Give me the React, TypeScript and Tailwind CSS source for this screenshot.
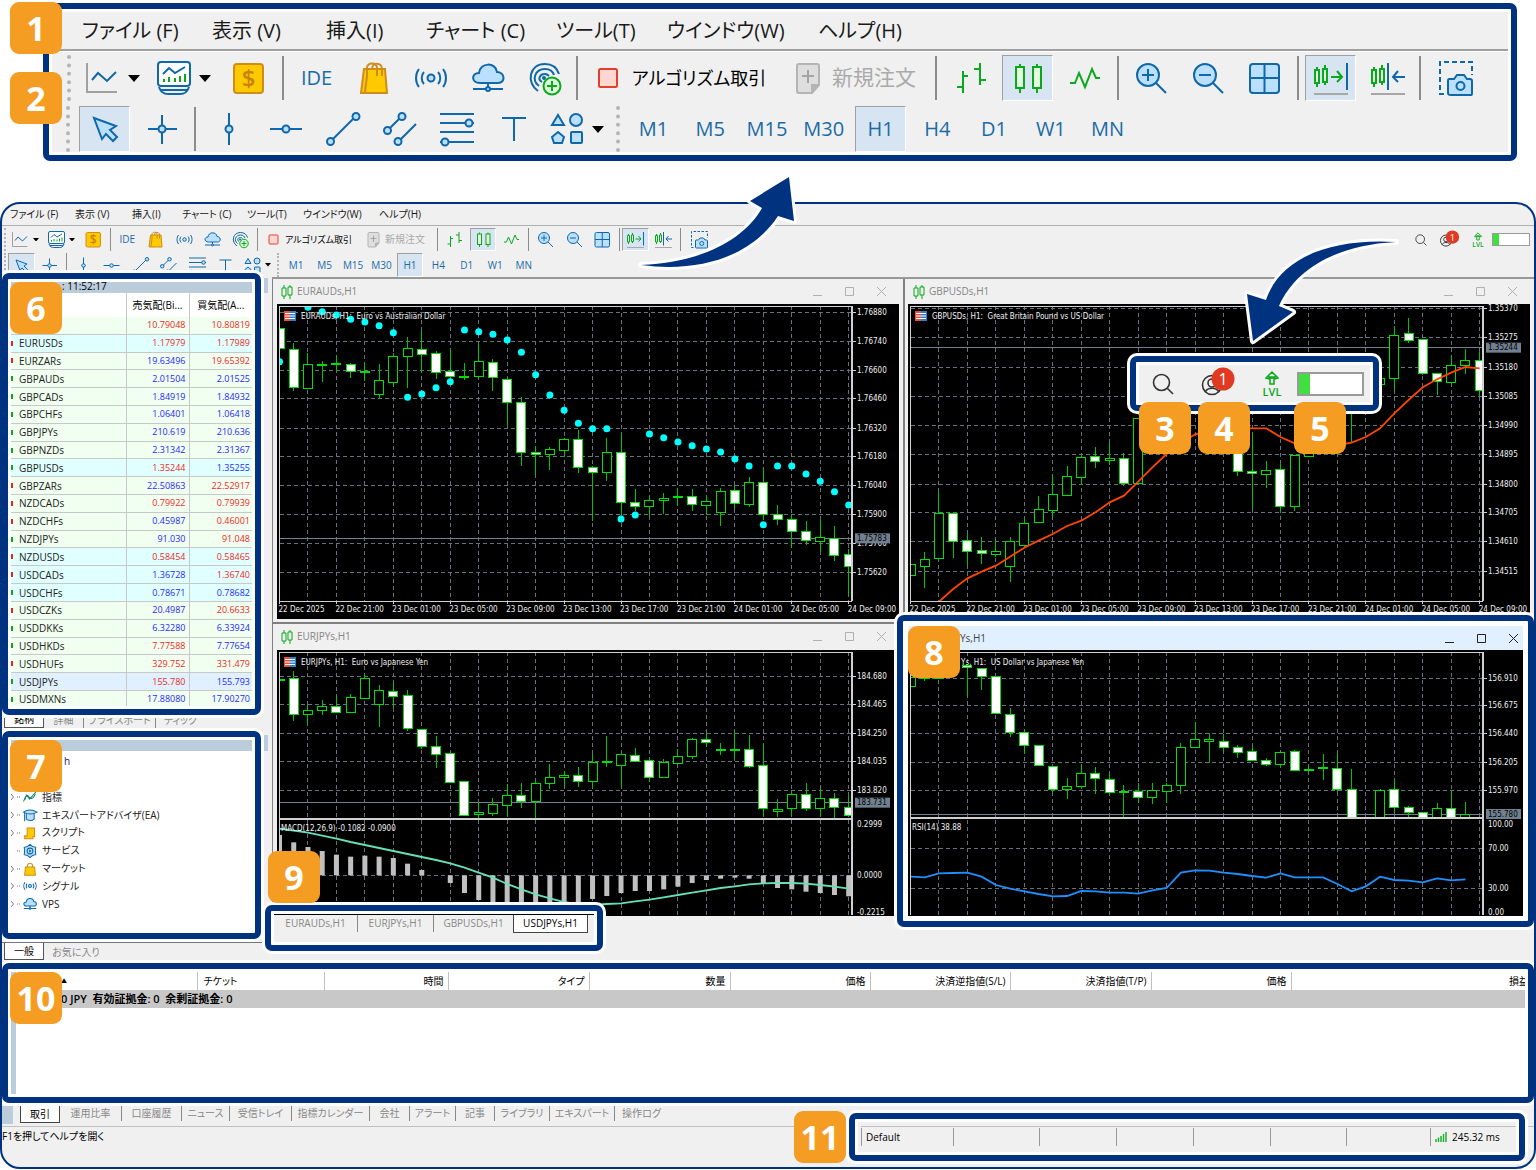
import type { ReactNode } from 'react';
import clsx from 'clsx';

const BLUE = '#0f68a8';
const SKY = '#bbe0ff';
const GREEN = '#0aa81c';
const LIME = '#00e000';

/* ---------- shared bits ---------- */

function Callout({ className, children }: { className?: string; children: ReactNode }) {
  return (
    <div className={clsx('rounded-[7px] border-[6px] border-[#00337f] bg-white ring-[3px] ring-white', className)}>
      {children}
    </div>
  );
}

function Badge({ n, className }: { n: number; className: string }) {
  return (
    <span
      className={clsx(
        'absolute z-20 flex size-[52px] items-center justify-center rounded-[9px] bg-[#f59c23] pb-px text-[34px] leading-none font-bold text-white',
        className,
      )}
    >
      {n}
    </span>
  );
}

/* ---------- toolbar icons, all on a 34 x 34 grid ---------- */

const icons: Record<string, ReactNode> = {
  line: (
    <>
      <path d="M1 2V31H31" stroke="#a0a0a0" />
      <path d="M6 19L12 12L21 20L30 11" stroke={BLUE} />
    </>
  ),
  monitor: (
    <>
      <rect x="1" y="1" width="32" height="24" rx="3" fill="#fff" stroke={BLUE} />
      <path d="M6 13L12 7L18 12L28 6" stroke={BLUE} />
      <path d="M7 21v-3M12 21v-5M18 21v-4M23 21v-6M28 21v-8" stroke={GREEN} />
      <path d="M2 26C4 32 8 33 11 33H23C27 33 30 32 32 26M4 29H30" stroke={BLUE} />
    </>
  ),
  dollar: (
    <>
      <rect x="2" y="3" width="29" height="29" rx="3" fill="#fdca00" stroke="#d08c18" />
      <text x="16.5" y="26" textAnchor="middle" fontSize="24" fontWeight="600" fill="#c98200">$</text>
    </>
  ),
  bag: (
    <>
      <path d="M7 8H28L30 32H4Z" fill="#fdca00" stroke="#d08c18" />
      <path d="M10 15V7C10 1 20 1 20 7V15M15 8C15 1 25 1 25 8V15M10 15L8 31" stroke="#d08c18" />
    </>
  ),
  signal: (
    <>
      <circle cx="17" cy="17" r="3.5" fill={SKY} stroke={BLUE} />
      <path d="M10 11C7 14 7 20 10 23M24 11C27 14 27 20 24 23M5 8C1 13 1 21 5 26M29 8C33 13 33 21 29 26" stroke={BLUE} />
    </>
  ),
  cloud: (
    <>
      <path d="M9 22C0 22 0 12 8 12C9 1 25 1 26 11C34 11 35 22 27 22Z" fill={SKY} stroke={BLUE} />
      <path d="M17 22V28M2 28H32" stroke={BLUE} />
      <circle cx="17" cy="28" r="2" fill={SKY} stroke={BLUE} />
    </>
  ),
  radar: (
    <>
      <path d="M10 30C-2 22 1 3 17 3C25 3 29 7 31 13M11 25C3 19 7 8 17 8C22 8 25 11 26 14M14 21C9 18 12 13 17 13C19 13 20 14 21 15" stroke={BLUE} />
      <circle cx="16" cy="17" r="2" fill={BLUE} />
      <circle cx="24" cy="25" r="8.5" fill="#dcfadc" stroke={GREEN} />
      <path d="M24 20V30M19 25H29" stroke={GREEN} />
    </>
  ),
  stop: <rect x="8" y="8" width="18" height="18" rx="1.5" fill="#ffd7d2" stroke="#e2402a" />,
  newOrder: (
    <>
      <path d="M8 3H26C27 3 28 4 28 5V24L21 32H8C7 32 6 31 6 30V5C6 4 7 3 8 3Z" fill="#dedede" stroke="#b4b4b4" />
      <path d="M28 24H21V32" fill="#b4b4b4" stroke="#b4b4b4" />
      <path d="M17 9V22M11 15H23" stroke="#a4a4a4" />
    </>
  ),
  bars: <path d="M9 10V32M3 26H9M9 15H14M26 2V24M20 8H26M26 19H32" stroke={GREEN} />,
  candles: (
    <>
      <path d="M9 3V32M26 3V32" stroke={GREEN} />
      <rect x="5" y="6" width="8" height="21" fill="#e4fbe0" stroke={GREEN} />
      <rect x="22" y="6" width="8" height="21" fill="#e4fbe0" stroke={GREEN} />
    </>
  ),
  zigzag: <path d="M2 22H7L11 12L17 26L24 8L28 17H32" stroke={GREEN} />,
  zoomIn: (
    <>
      <circle cx="14" cy="14" r="11" fill={SKY} stroke={BLUE} />
      <path d="M22 22L32 32M14 8V20M8 14H20" stroke={BLUE} />
    </>
  ),
  zoomOut: (
    <>
      <circle cx="14" cy="14" r="11" fill={SKY} stroke={BLUE} />
      <path d="M22 22L32 32M8 14H20" stroke={BLUE} />
    </>
  ),
  tile: (
    <>
      <rect x="2" y="3" width="29" height="29" rx="3" fill={SKY} stroke={BLUE} />
      <path d="M16.5 3V32M2 17H31" stroke={BLUE} />
    </>
  ),
  autoScroll: (
    <>
      <path d="M3 6V26M11 4V24M17 16H28M23 10L28 16L23 21" stroke={GREEN} />
      <path d="M1 9H5V22H1ZM9 8H13V21H9Z" fill="#e4fbe0" stroke={GREEN} />
      <path d="M33 2V29" stroke={BLUE} />
      <path d="M0 33H34" stroke="#a8a8a8" />
    </>
  ),
  shift: (
    <>
      <path d="M3 6V26M11 4V24" stroke={GREEN} />
      <path d="M1 9H5V22H1ZM9 8H13V21H9Z" fill="#e4fbe0" stroke={GREEN} />
      <path d="M17 2V29M22 16H34M27 10L22 16L27 21" stroke={BLUE} />
      <path d="M0 33H34" stroke="#a8a8a8" />
    </>
  ),
  camera: (
    <>
      <path d="M5 33H1V1H33V14" stroke={BLUE} strokeDasharray="5 3" />
      <path d="M10 18H15L18 14H25L28 18H31C33 18 33 19 33 20V32C33 34 33 34 31 34H12C10 34 9 34 9 32V20C9 19 9 18 10 18Z" fill={SKY} stroke={BLUE} />
      <circle cx="21.5" cy="25" r="4" fill={SKY} stroke={BLUE} />
    </>
  ),
  cursor: <path d="M6 6L28 14L22 18L29 25L25 29L18 22L14 27Z" fill={SKY} stroke={BLUE} />,
  cross: (
    <>
      <path d="M17 3V32M3 17H32" stroke={BLUE} />
      <circle cx="17" cy="17" r="3.5" fill={SKY} stroke={BLUE} />
    </>
  ),
  vline: (
    <>
      <path d="M17 1V33" stroke={BLUE} />
      <circle cx="17" cy="17" r="3.5" fill={SKY} stroke={BLUE} />
    </>
  ),
  hline: (
    <>
      <path d="M1 17H33" stroke={BLUE} />
      <circle cx="17" cy="17" r="3.5" fill={SKY} stroke={BLUE} />
    </>
  ),
  trend: (
    <>
      <path d="M5 29L29 5" stroke={BLUE} />
      <circle cx="30" cy="4.5" r="3.5" fill={SKY} stroke={BLUE} />
      <circle cx="4.5" cy="29.5" r="3.5" fill={SKY} stroke={BLUE} />
    </>
  ),
  channel: (
    <>
      <path d="M5 18L19 4M15 30L33 12" stroke={BLUE} />
      <circle cx="19" cy="4.5" r="3.5" fill={SKY} stroke={BLUE} />
      <circle cx="4.5" cy="18.5" r="3.5" fill={SKY} stroke={BLUE} />
      <circle cx="15" cy="29.5" r="3.5" fill={SKY} stroke={BLUE} />
    </>
  ),
  fibo: (
    <>
      <path d="M0 2H34M0 11H34M0 20H34M0 30H34" stroke={BLUE} />
      <circle cx="29" cy="11" r="3.5" fill={SKY} stroke={BLUE} />
      <circle cx="5" cy="30" r="3.5" fill={SKY} stroke={BLUE} />
    </>
  ),
  text: <path d="M5 6H29M17 6V29" stroke={BLUE} />,
  shapes: (
    <g fill={SKY} stroke={BLUE}>
      <path d="M8 3L14 13H2Z" />
      <circle cx="26" cy="8" r="6" />
      <path d="M8 20L14 25L12 31H4L2 25Z" />
      <rect x="21" y="20" width="11" height="11" rx="1" />
    </g>
  ),
};

function Icon({ name, className }: { name: string; className?: string }) {
  return (
    <svg viewBox="0 0 34 34" fill="none" strokeWidth="2" className={clsx('shrink-0 overflow-visible', className)} aria-hidden="true">
      {icons[name]}
    </svg>
  );
}

/* ---------- menu + toolbars (large copy and window copy) ---------- */

const menus = [
  { label: 'ファイル (F)', big: 'w-[130px]', small: 'w-[65px]' },
  { label: '表示 (V)', big: 'w-[114px]', small: 'w-[57px]' },
  { label: '挿入(I)', big: 'w-[100px]', small: 'w-[50px]' },
  { label: 'チャート (C)', big: 'w-[130px]', small: 'w-[65px]' },
  { label: 'ツール(T)', big: 'w-[111px]', small: 'w-[56px]' },
  { label: 'ウインドウ(W)', big: 'w-[151px]', small: 'w-[76px]' },
  { label: 'ヘルプ(H)', big: 'w-[100px]', small: 'w-[50px]' },
];

function MenuBar({ big }: { big?: boolean }) {
  return (
    <nav className={clsx('flex items-center whitespace-nowrap text-[#1a1a1a]', big ? 'h-[37px] pl-[30px] text-[20px]' : 'h-[21px] pl-2 text-[10px]')}>
      {menus.map(m => (
        <button key={m.label} className={clsx('text-left', big ? m.big : m.small)}>{m.label}</button>
      ))}
    </nav>
  );
}

function Tool({ big, name, on, label }: { big?: boolean; name?: string; on?: boolean; label?: string }) {
  return (
    <button
      aria-label={label ?? name}
      className={clsx(
        'flex flex-1 items-center justify-center border text-[#1a6ba6]',
        big ? 'mx-[3px] text-[20px]' : 'mx-px text-[10px]',
        on ? 'border-t-[#a0a0a0] border-r-white border-b-white border-l-[#a0a0a0] bg-[#d7e4f2]' : 'border-transparent',
      )}
    >
      {name ? <Icon name={name} className={big ? 'size-[34px]' : 'size-[17px]'} /> : label}
    </button>
  );
}

function DropTool({ big, name }: { big?: boolean; name: string }) {
  return (
    <button aria-label={name} className={clsx('flex flex-1 items-center', big ? 'gap-2 pl-2' : 'gap-1 pl-1')}>
      <Icon name={name} className={big ? 'size-[34px]' : 'size-[17px]'} />
      <svg viewBox="0 0 12 7" className={big ? 'w-3' : 'w-[6px]'} aria-hidden="true"><path d="M0 0H12L6 7Z" /></svg>
    </button>
  );
}

function Sep({ big, className }: { big?: boolean; className: string }) {
  return (
    <span className={clsx('flex shrink-0 justify-center', big && 'py-px', className)}>
      <i className={clsx('bg-[#8c8c8c]', big ? 'w-[2px]' : 'w-px')} />
    </span>
  );
}

function Grip({ big, className }: { big?: boolean; className: string }) {
  return (
    <span className={clsx('flex shrink-0 justify-center', className)}>
      <i className={clsx('border-dotted border-[#b4b4b4]', big ? 'border-l-4' : 'border-l-2')} />
    </span>
  );
}

const frames = ['M1', 'M5', 'M15', 'M30', 'H1', 'H4', 'D1', 'W1', 'MN'];

function Toolbars({ big, children }: { big?: boolean; children?: ReactNode }) {
  const w = (large: string, small: string) => clsx('flex shrink-0', big ? large : small);
  const icon = big ? 'size-[34px]' : 'size-[17px]';
  return (
    <>
      <div className={clsx('flex items-stretch', big ? 'h-[51px] pt-[3px] pb-[2px]' : 'h-[27px] py-[2px]')}>
        <Grip big={big} className={big ? 'w-[26px] pl-2' : 'w-[6px]'} />
        <div className={w('w-[142px]', 'w-[71px]')}>
          <DropTool big={big} name="line" />
          <DropTool big={big} name="monitor" />
        </div>
        <div className={w('w-[58px]', 'w-[29px]')}><Tool big={big} name="dollar" /></div>
        <Sep big={big} className={big ? 'w-[10px]' : 'w-[5px]'} />
        <div className={w('w-[285px]', 'w-[142px]')}>
          <Tool big={big} label="IDE" />
          {['bag', 'signal', 'cloud', 'radar'].map(n => <Tool key={n} big={big} name={n} />)}
        </div>
        <Sep big={big} className={big ? 'w-[8px]' : 'w-[5px]'} />
        <button className={clsx('flex shrink-0 items-center whitespace-nowrap text-black', big ? 'w-[200px] gap-[7px] pl-[10px] text-[18px]' : 'w-[100px] gap-[3px] pl-[5px] text-[9px]')}>
          <Icon name="stop" className={icon} />アルゴリズム取引
        </button>
        <button disabled className={clsx('flex shrink-0 items-center whitespace-nowrap text-[#aaa]', big ? 'w-[149px] gap-[7px] pl-[10px] text-[21px]' : 'w-[74px] gap-[3px] pl-[5px] text-[10px]')}>
          <Icon name="newOrder" className={icon} />新規注文
        </button>
        <Sep big={big} className={big ? 'w-[12px]' : 'w-[6px]'} />
        <div className={w('w-[171px]', 'w-[86px]')}>
          <Tool big={big} name="bars" /><Tool big={big} name="candles" on /><Tool big={big} name="zigzag" />
        </div>
        <Sep big={big} className={big ? 'w-[9px]' : 'w-[5px]'} />
        <div className={w('w-[171px]', 'w-[86px]')}>
          <Tool big={big} name="zoomIn" /><Tool big={big} name="zoomOut" /><Tool big={big} name="tile" />
        </div>
        <Sep big={big} className={big ? 'w-[9px]' : 'w-[4px]'} />
        <div className={w('w-[114px]', 'w-[57px]')}>
          <Tool big={big} name="autoScroll" on /><Tool big={big} name="shift" />
        </div>
        <Sep big={big} className={big ? 'w-[8px]' : 'w-[4px]'} />
        <div className={w('w-[64px]', 'w-[34px]')}><Tool big={big} name="camera" /></div>
        {children}
      </div>
      <div className={clsx('flex items-stretch', big ? 'h-[49px] pt-[3px]' : 'h-6')}>
        <Grip big={big} className={big ? 'w-[24px] pl-2' : 'w-[5px]'} />
        <div className={w('w-[114px]', 'w-[57px]')}>
          <Tool big={big} name="cursor" on /><Tool big={big} name="cross" />
        </div>
        <Sep big={big} className={big ? 'w-[10px]' : 'w-[5px]'} />
        <div className={w('w-[342px]', 'w-[171px]')}>
          {['vline', 'hline', 'trend', 'channel', 'fibo', 'text'].map(n => <Tool key={n} big={big} name={n} />)}
        </div>
        <div className={w('w-[69px]', 'w-[34px]')}><DropTool big={big} name="shapes" /></div>
        <Grip big={big} className={big ? 'w-[14px]' : 'w-[8px]'} />
        <div className={w('w-[511px]', 'w-[256px]')}>
          {frames.map(f => <Tool key={f} big={big} label={f} on={f === 'H1'} />)}
        </div>
      </div>
    </>
  );
}

function Account({ big }: { big?: boolean }) {
  return (
    <div className={clsx('flex items-center', big ? 'h-full gap-[26px] pl-[13px]' : 'ml-auto gap-3 pr-1')}>
      <button aria-label="検索">
        <svg viewBox="0 0 22 22" fill="none" stroke="#333" strokeWidth="1.6" className={big ? 'size-[22px]' : 'size-3'}>
          <circle cx="9.5" cy="9.5" r="8" /><path d="M15.5 15.5L21 21" />
        </svg>
      </button>
      <button aria-label="アカウント">
        <svg viewBox="0 0 36 24" className={clsx('overflow-visible', big ? 'h-6 w-9' : 'h-[14px] w-[21px]')}>
          <g fill="none" stroke="#333" strokeWidth="1.6">
            <circle cx="12" cy="13" r="9.5" /><circle cx="12" cy="11" r="4" /><path d="M5 20C8 15 16 15 19 20" />
          </g>
          <circle cx="23" cy="7" r="11.5" fill="#e03a22" />
          <text x="23" y="13" textAnchor="middle" fontSize="16" fill="#fff">1</text>
        </svg>
      </button>
      <svg viewBox="0 0 20 26" className={big ? 'h-[26px] w-5' : 'h-4 w-3'}>
        <path d="M10 1L16 7L13 8V6H7V8L4 7ZM8 7H12V13H8Z" fill="none" stroke={GREEN} strokeWidth="1.5" />
        <text x="10" y="25" textAnchor="middle" fontSize="11" fontWeight="600" fill={GREEN}>LVL</text>
      </svg>
      <div className={clsx('border-[#9a9a9a] bg-white', big ? '-ml-[11px] h-6 w-[67px] border-2' : '-ml-1 h-[13px] w-[38px] border')}>
        <div className={clsx('h-full bg-[#3fe03f]', big ? 'w-[11px]' : 'w-[6px]')} />
      </div>
    </div>
  );
}

/* ---------- charts ---------- */

// high, body top, body bottom, low (thirds of a pixel under the origin), 1 = falling
type Candle = [number, number, number, number, number] | null;

const PITCH = 14.23;

const euraud: Candle[] = [
  [145, 145, 206, 206, 1], [190, 207, 322, 332, 1], [220, 253, 325, 328, 0], [243, 252, 254, 307, 0], [226, 250, 252, 275, 0],
  [250, 253, 274, 293, 1], [250, 273, 275, 303, 0], [252, 300, 344, 356, 0], [218, 229, 306, 322, 0], [171, 205, 230, 323, 0],
  [153, 207, 223, 278, 1], [214, 220, 276, 296, 1], [208, 274, 290, 290, 1], [249, 288, 290, 299, 0], [192, 244, 288, 290, 0],
  [238, 247, 293, 333, 1], [297, 297, 367, 437, 1], [352, 367, 517, 557, 1], [498, 516, 522, 584, 1], [500, 508, 523, 570, 0],
  [475, 479, 512, 531, 0], [450, 479, 562, 580, 1], [557, 562, 577, 723, 1], [475, 517, 577, 602, 0], [463, 517, 666, 710, 1],
  [628, 668, 680, 693, 1], [650, 661, 680, 710, 0], [638, 655, 660, 703, 0], [625, 650, 653, 677, 0], [628, 650, 674, 692, 1],
  [648, 664, 677, 706, 0], [625, 633, 697, 738, 0], [615, 631, 671, 688, 1], [592, 607, 674, 680, 0], [560, 607, 703, 720, 1],
  [675, 703, 719, 735, 1], [703, 718, 754, 804, 1], [724, 754, 782, 796, 1], [720, 772, 783, 815, 0], [738, 775, 826, 842, 1],
  [808, 823, 860, 948, 1],
];

const sar = [
  245, 0, 82, 95, 105, 118, 126, 137, 158, 352, 342, 323, 305, 150, 155, 163, 180, 217, 284, 345, 391, 430, 446, 446, 717, 705,
  462, 473, 486, 497, 507, 516, 537, 558, 734, 558, 558, 582, 604, 635, 675,
];

const eurjpy: Candle[] = [
  [177, 177, 179, 179, 0], [154, 175, 284, 302, 1], [256, 272, 284, 312, 0], [239, 259, 272, 284, 0], [228, 259, 276, 278, 1],
  [222, 232, 276, 276, 0], [161, 175, 234, 234, 0], [194, 211, 252, 320, 0], [187, 213, 228, 265, 1], [210, 227, 326, 332, 1],
  [328, 328, 380, 388, 1], [349, 379, 404, 444, 1], [400, 400, 487, 487, 1], [485, 485, 587, 587, 1], [545, 578, 584, 595, 0],
  [533, 553, 581, 587, 0], [491, 525, 556, 592, 0], [488, 525, 545, 563, 1], [480, 490, 545, 594, 0], [432, 472, 491, 507, 0],
  [452, 466, 472, 500, 0], [442, 466, 485, 502, 1], [402, 427, 485, 505, 0], [348, 424, 427, 442, 0], [402, 403, 437, 503, 0],
  [384, 405, 423, 425, 1], [414, 421, 473, 485, 1], [418, 427, 473, 474, 0], [387, 409, 429, 432, 0], [355, 358, 409, 418, 0],
  [340, 358, 368, 379, 1], [368, 389, 392, 404, 0], [333, 388, 390, 416, 0], [346, 389, 438, 445, 1], [369, 437, 566, 592, 1],
  [538, 569, 574, 590, 0], [513, 523, 566, 588, 0], [488, 523, 566, 572, 1], [507, 535, 566, 592, 0], [519, 535, 563, 594, 1],
  [525, 563, 586, 592, 1],
];

const macdBars = [
  645, 667, 681, 693, 704, 710, 707, 710, 714, 731, 750, 766, 789, 819, 840, 856, 868, 874, 876, 870, 860, 848, 837, 828, 819,
  813, 813, 808, 800, 789, 780, 776, 773, 776, 790, 804, 808, 815, 819, 825, 829,
];

const macdLine = [
  626, 632, 638, 647, 656, 666, 675, 684, 693, 702, 711, 720, 730, 743, 758, 773, 792, 808, 823, 835, 846, 853, 855, 852, 850,
  844, 839, 832, 825, 818, 811, 804, 799, 793, 790, 789, 789, 791, 795, 800, 806,
];

const gbpusd: Candle[] = [
  [1108, 1108, 1142, 1142, 0], [1072, 1093, 1113, 1178, 0], [890, 955, 1090, 1092, 0], [953, 955, 1038, 1090, 1], [1018, 1037, 1070, 1110, 1],
  [1025, 1067, 1075, 1107, 1], [1033, 1069, 1078, 1085, 0], [1025, 1039, 1114, 1160, 0], [969, 985, 1052, 1053, 0], [902, 944, 982, 983, 0],
  [840, 899, 946, 967, 0], [813, 845, 902, 903, 0], [780, 787, 847, 867, 0], [755, 783, 798, 820, 1], [743, 791, 797, 809, 0],
  [775, 790, 865, 873, 1], [670, 670, 865, 867, 0], [600, 640, 680, 700, 0], [580, 620, 680, 700, 0], [580, 600, 640, 650, 1],
  [560, 600, 640, 656, 0], null, [600, 620, 700, 720, 1], [690, 700, 828, 842, 1], [715, 829, 835, 943, 1],
  [797, 826, 838, 879, 0], [807, 823, 935, 953, 1], [780, 780, 934, 947, 0], [700, 700, 784, 784, 0], null,
  [470, 560, 620, 640, 0], [600, 610, 640, 742, 0], null, [528, 550, 567, 622, 0], [392, 420, 550, 585, 0],
  [370, 415, 437, 443, 1], [433, 433, 536, 540, 1], [535, 535, 560, 600, 1], [480, 511, 562, 565, 0], [462, 496, 512, 538, 0],
  [472, 496, 587, 603, 1],
];

const average = [
  1290, 1255, 1220, 1182, 1150, 1130, 1112, 1085, 1058, 1037, 1017, 993, 977, 952, 922, 902, 860, 817, 777, 745, 718, 708, 702,
  700, 700, 700, 726, 745, 755, 758, 750, 743, 726, 700, 655, 615, 577, 553, 533, 516, 520,
];

const usdjpy: Candle[] = [
  [700, 712, 739, 739, 0], [700, 700, 715, 722, 0], [690, 690, 715, 718, 0], [670, 680, 700, 705, 0], [675, 677, 681, 768, 1],
  [683, 685, 710, 750, 1], [708, 710, 821, 823, 1], [805, 823, 877, 890, 1], [868, 877, 916, 943, 1], [916, 916, 975, 977, 1],
  [978, 980, 1047, 1057, 1], [1015, 1039, 1047, 1077, 0], [973, 1000, 1040, 1043, 0], [982, 1001, 1015, 1062, 1], [1002, 1018, 1057, 1060, 1],
  [1036, 1053, 1057, 1132, 1], [1029, 1053, 1072, 1090, 1], [1030, 1051, 1072, 1091, 0], [1030, 1037, 1053, 1090, 0], [910, 922, 1037, 1062, 0],
  [846, 898, 923, 923, 0], [880, 897, 903, 970, 0], [883, 903, 923, 933, 1], [916, 922, 938, 955, 1], [918, 934, 962, 963, 1],
  [953, 962, 973, 977, 1], [934, 937, 973, 980, 0], [930, 935, 990, 990, 1], [977, 987, 991, 992, 0], [942, 983, 986, 1020, 0],
  [942, 985, 1047, 1055, 1], [988, 1047, 1140, 1140, 1], null, [1047, 1052, 1140, 1140, 0], [1020, 1049, 1103, 1118, 1],
  [1098, 1103, 1116, 1130, 1], [1116, 1116, 1140, 1140, 1], [1088, 1105, 1140, 1140, 0], [1054, 1105, 1140, 1140, 1], [1085, 1122, 1140, 1140, 0],
];

const rsi = [
  1310, 1312, 1300, 1299, 1298, 1310, 1335, 1346, 1354, 1362, 1369, 1368, 1353, 1354, 1358, 1358, 1361, 1351, 1344, 1298, 1291,
  1292, 1298, 1302, 1308, 1313, 1300, 1312, 1312, 1312, 1332, 1354, 1339, 1310, 1320, 1322, 1327, 1315, 1321, 1318,
];

const dates = [
  '22 Dec 2025', '22 Dec 21:00', '23 Dec 01:00', '23 Dec 05:00', '23 Dec 09:00', '23 Dec 13:00', '23 Dec 17:00', '23 Dec 21:00',
  '24 Dec 01:00', '24 Dec 05:00', '24 Dec 09:00',
];

type ChartProps = {
  id: string;
  box: [number, number, number, number];
  origin: number;
  bottom: number;
  title: string;
  titleInset?: number;
  candles: Candle[];
  scale: [number, string][];
  price: [number, string];
  showDates?: boolean;
  // lower indicator pane
  pane?: { caption: string; labels: [number, string][]; lines: number[] };
  overlay: (x: (i: number) => number, y: (v: number) => number) => ReactNode;
};

function Chart({ id, box, origin, bottom, title, titleInset = 24, candles, scale, price, showDates, pane, overlay }: ChartProps) {
  const [bx, by, bw, bh] = box;
  const left = bx + 3;
  const right = bx + 575;
  const top = by + 2;
  const end = pane ? by + bh - 1 : bottom;
  const x = (i: number) => bx + 2.5 + i * PITCH;
  const y = (v: number) => origin + v / 3;

  return (
    <svg viewBox={box.join(' ')} className="block w-full bg-black font-['DejaVu_Sans_Condensed',sans-serif]" fontSize="8" role="img" aria-label={title}>
      <defs>
        <clipPath id={id}><rect x={left} y={top} width={right - left} height={bottom - top} /></clipPath>
        <clipPath id={id + '-all'}><rect x={left} y={top} width={right - left} height={end - top} /></clipPath>
      </defs>
      <g stroke="#64717f" strokeDasharray="4 3" shapeRendering="crispEdges">
        {Array.from({ length: 20 }, (_, k) => <path key={k} d={`M${x(2 * k + 2)} ${top}V${end}`} />)}
        {scale.map(([v]) => <path key={v} d={`M${left} ${y(v)}H${right}`} />)}
        {pane?.lines.map(v => <path key={v} d={`M${left} ${y(v)}H${right}`} />)}
      </g>
      <path d={`M${left} ${y(price[0])}H${right}`} stroke="#708090" shapeRendering="crispEdges" />
      <g clipPath={`url(#${id})`} shapeRendering="crispEdges">
        {candles.map((c, i) => c && (
          <g key={i} stroke={LIME}>
            <path d={`M${x(i)} ${y(c[0])}V${y(c[3])}`} stroke="#00c400" />
            <rect x={x(i) - 4.5} y={y(c[1])} width="9" height={Math.max(1, (c[2] - c[1]) / 3)} fill={c[4] ? '#fff' : '#000'} />
          </g>
        ))}
      </g>
      <g clipPath={`url(#${id}-all)`}>{overlay(x, y)}</g>
      <g stroke="#d0d0d0" fill="none" shapeRendering="crispEdges">
        <path d={`M${left - 0.5} ${end}V${top}H${right}`} />
        <path d={`M${right} ${top}V${end}`} strokeWidth="2" />
        <path d={`M${left} ${bottom}H${right}`} strokeWidth={pane ? 2 : 1} />
        {scale.map(([v]) => <path key={v} d={`M${right} ${y(v)}h4`} />)}
        {showDates && dates.map((d, k) => <path key={d} d={`M${x(4 * k)} ${bottom}v3`} />)}
      </g>
      <g fill="#f0f0f0" dominantBaseline="central">
        {scale.map(([v, t]) => <text key={t} x={right + 5} y={y(v)}>{t}</text>)}
        {pane?.labels.map(([v, t]) => <text key={t} x={right + 5} y={y(v)}>{t}</text>)}
        {showDates && dates.map((d, k) => <text key={d} x={x(4 * k) - 1} y={bottom + 8}>{d}</text>)}
        <text x={bx + titleInset} y={by + 12} className="whitespace-pre">{title}</text>
        {pane && <text x={left + 1} y={bottom + 9}>{pane.caption}</text>}
      </g>
      <rect x={bx + 7} y={by + 7} width="6" height="10" fill="#e8503c" />
      <rect x={bx + 13} y={by + 7} width="6" height="10" fill="#2f80c8" />
      <path d={`M${bx + 8} ${by + 9.5}h10M${bx + 8} ${by + 12}h10M${bx + 8} ${by + 14.5}h10`} stroke="#fff" />
      <rect x={right + 3} y={y(price[0]) - 5} width="35" height="10" fill="#708090" />
      <text x={right + 5} y={y(price[0])} dominantBaseline="central">{price[1]}</text>
    </svg>
  );
}

const points = (data: number[], x: (i: number) => number, y: (v: number) => number) =>
  data.map((v, i) => `${x(i)},${y(v)}`).join(' ');

function WindowTitle({ name, active }: { name: string; active?: boolean }) {
  return (
    <div className={clsx('flex items-center text-[10px]', active ? 'h-6 bg-[#e0f0fe] pl-[52px] text-[#444]' : 'h-[25px] pl-2 text-[#858585]')}>
      {!active && (
        <svg viewBox="0 0 12 14" className="mr-1 h-[14px] w-3" fill="none" stroke={GREEN}>
          <path d="M3 0V14M9 0V14" /><path d="M1 3H5V11H1ZM7 2H11V10H7Z" fill="#f0f0f0" />
        </svg>
      )}
      {name}
      <div className={clsx('ml-auto flex items-center gap-[21px]', active ? 'pr-1 text-[#222]' : 'pr-4 text-[#b0b0b0]')}>
        {['M1 9.5H10', 'M1.5 1.5H9.5V9.5H1.5Z', 'M1 1L10 10M10 1L1 10'].map((d, i) => (
          <button key={d} aria-label={['最小化', '最大化', '閉じる'][i]}>
            <svg viewBox="0 0 11 11" className="size-[11px]" fill="none" stroke="currentColor"><path d={d} /></svg>
          </button>
        ))}
      </div>
    </div>
  );
}

/* ---------- side panels ---------- */

// symbol, bid, ask, bid up, ask up, direction tick, row shade
const quotes: [string, string, string, number, number, number, string][] = [
  ['', '10.79048', '10.80819', 0, 0, 0, 'g'],
  ['EURUSDs', '1.17979', '1.17989', 0, 0, 0, 'c'],
  ['EURZARs', '19.63496', '19.65392', 1, 0, 0, 'g'],
  ['GBPAUDs', '2.01504', '2.01525', 1, 1, 1, 'g'],
  ['GBPCADs', '1.84919', '1.84932', 1, 1, 1, 'g'],
  ['GBPCHFs', '1.06401', '1.06418', 1, 1, 1, 'g'],
  ['GBPJPYs', '210.619', '210.636', 1, 1, 1, 'g'],
  ['GBPNZDs', '2.31342', '2.31367', 1, 1, 1, 'g'],
  ['GBPUSDs', '1.35244', '1.35255', 0, 1, 1, 'c'],
  ['GBPZARs', '22.50863', '22.52917', 1, 0, 0, 'g'],
  ['NZDCADs', '0.79922', '0.79939', 0, 0, 0, 'g'],
  ['NZDCHFs', '0.45987', '0.46001', 1, 0, 0, 'g'],
  ['NZDJPYs', '91.030', '91.048', 1, 0, 1, 'g'],
  ['NZDUSDs', '0.58454', '0.58465', 0, 0, 0, 'c'],
  ['USDCADs', '1.36728', '1.36740', 1, 0, 0, 'c'],
  ['USDCHFs', '0.78671', '0.78682', 1, 1, 1, 'c'],
  ['USDCZKs', '20.4987', '20.6633', 1, 0, 0, 'g'],
  ['USDDKKs', '6.32280', '6.33924', 1, 1, 1, 'g'],
  ['USDHKDs', '7.77588', '7.77654', 0, 1, 1, 'g'],
  ['USDHUFs', '329.752', '331.479', 0, 0, 0, 'g'],
  ['USDJPYs', '155.780', '155.793', 0, 1, 1, 's'],
  ['USDMXNs', '17.88080', '17.90270', 1, 1, 1, 'g'],
];

const shades: Record<string, string> = { g: 'bg-[#f0fff0]', c: 'bg-[#e0ffff]', s: 'bg-[#e0f0ff]' };
const tone = (up: number) => (up ? 'text-[#2828ff]' : 'text-[#f0281e]');

function MarketWatch() {
  return (
    <div className="h-[424px] overflow-hidden">
      <div className="h-[11px] bg-[#bbccdb] pl-[51px] text-[10px] leading-[9px]">: 11:52:17</div>
      <table className="h-[416px] w-full table-fixed border-collapse text-right text-[9px] leading-[14px] whitespace-nowrap">
        <colgroup><col /><col className="w-[63px]" /><col className="w-[63px]" /></colgroup>
        <thead>
          <tr className="text-center text-[10px]">
            <th className="h-6" aria-label="銘柄" />
            <th className="h-6 border-l border-[#c8c8c8] p-0 font-normal">売気配(Bi...</th>
            <th className="h-6 border-l border-[#c8c8c8] p-0 font-normal">買気配(A...</th>
          </tr>
        </thead>
        <tbody>
          {quotes.map(([symbol, bid, ask, bidUp, askUp, dir, shade]) => (
            <tr key={bid} className={clsx('border-b border-[#c8c8c8]', shades[shade])}>
              <td className="p-0 text-[10px] text-[#222]">
                <div className="flex items-center gap-[6px]">
                  <i className={clsx('h-[5px] w-[2px]', dir ? 'bg-[#0aa81c]' : 'bg-[#e0281c]')} />{symbol}
                </div>
              </td>
              <td className={clsx('border-l border-[#c8c8c8] p-0 pr-[3px]', tone(bidUp))}>{bid}</td>
              <td className={clsx('border-l border-[#c8c8c8] p-0 pr-[2px]', tone(askUp))}>{ask}</td>
            </tr>
          ))}
        </tbody>
      </table>
    </div>
  );
}

const hat = (
  <g stroke={BLUE} fill={SKY}>
    <path d="M8 13V27C14 31 22 31 27 27V13" /><path d="M1 10C12 3 22 3 34 10C24 16 12 16 1 10Z" /><path d="M4 11V32" />
  </g>
);
const nav: [string, ReactNode][] = [
  ['指標', <><path d="M1 28L9 12L16 22L32 4" stroke={GREEN} /><path d="M4 24C12 -6 16 40 30 10" stroke={BLUE} /></>],
  ['エキスパートアドバイザ(EA)', hat],
  ['スクリプト', <path d="M10 5H28V26H24V31H4V24H10Z" fill="#fdca00" stroke="#d08c18" />],
  ['サービス', <><path d="M17 1L23 6L31 8L30 17L31 26L23 28L17 33L11 28L3 26L4 17L3 8L11 6Z" fill={SKY} stroke={BLUE} /><circle cx="17" cy="17" r="7" stroke={BLUE} /><path d="M15 13L21 17L15 21Z" fill={BLUE} /></>],
  ['マーケット', <><path d="M6 12H28L30 32H4Z" fill="#fdca00" stroke="#d08c18" /><path d="M11 12V8C11 2 23 2 23 8V12" stroke="#d08c18" /></>],
  ['シグナル', icons.signal],
  ['VPS', icons.cloud],
];

function Navigator() {
  return (
    <div className="h-[190px] text-[10px]">
      <div className="h-[11px] bg-[#bbccdb]" />
      <ul className="mt-[2px] grid h-40 grid-rows-9 text-[#222]">
        <li className="flex items-center pl-[53px] text-[#202060]">h</li>
        <li />
        {nav.map(([label, art]) => (
          <li key={label} className="flex items-center">
            <svg viewBox="0 0 12 10" className="h-[10px] w-3" fill="none" stroke="#777">
              {label !== 'サービス' && <path d="M0 2L2.5 5L0 8" />}
              <path d="M6 5H10" strokeDasharray="1 1" />
            </svg>
            <svg viewBox="0 0 34 34" className="size-[14px] overflow-visible" fill="none" strokeWidth="2.5">{art}</svg>
            <a href="#" className="ml-[5px] whitespace-nowrap">{label}</a>
          </li>
        ))}
      </ul>
    </div>
  );
}

/* ---------- bottom toolbox ---------- */

const columns: [string, string][] = [
  ['時間', 'w-[124px]'], ['タイプ', 'w-[141px]'], ['数量', 'w-[141px]'], ['価格', 'w-[140px]'], ['決済逆指値(S/L)', 'w-[140px]'],
  ['決済指値(T/P)', 'w-[141px]'], ['価格', 'w-[140px]'],
];

const toolboxTabs: [string, string][] = [
  ['運用比率', 'w-[61px]'], ['口座履歴', 'w-[60px]'], ['ニュース', 'w-[48px]'], ['受信トレイ', 'w-[62px]'], ['指標カレンダー', 'w-[78px]'],
  ['会社', 'w-[40px]'], ['アラート', 'w-[46px]'], ['記事', 'w-[39px]'], ['ライブラリ', 'w-[55px]'], ['エキスパート', 'w-[65px]'], ['操作ログ', 'w-[54px]'],
];

function Toolbox() {
  return (
    <div className="flex h-[122px] overflow-hidden">
      <div className="w-[5px] shrink-0 bg-[#bbccdb]" />
      <table className="w-full table-fixed border-collapse self-start text-right text-[10px] leading-[14px] whitespace-nowrap">
        <thead>
          <tr className="h-[18px]">
            <th className="w-[181px] p-0 pl-[45px] text-left text-[6px]">▲</th>
            <th className="w-[127px] border-l border-[#c0c0c0] p-0 pl-[6px] text-left font-normal">チケット</th>
            {columns.map(([label, width], i) => (
              <th key={i} className={clsx('border-l border-[#c0c0c0] p-0 pr-1 font-normal', width)}>{label}</th>
            ))}
            <th className="border-l border-[#c0c0c0] p-0 font-normal"><div className="-mr-1 overflow-hidden">損益</div></th>
          </tr>
        </thead>
        <tbody>
          <tr className="h-[18px] bg-[#c8c8c8]">
            <td colSpan={10} className="p-0 pl-[45px] text-left text-[11px] font-semibold whitespace-pre">0 JPY  有効証拠金: 0  余剰証拠金: 0</td>
          </tr>
        </tbody>
      </table>
    </div>
  );
}

function StatusCallout() {
  const cell = 'h-[18px] border-l border-[#9a9a9a]';
  return (
    <Callout className="relative z-10 -mt-[14px] mr-[9px] h-12 w-[676px] shrink-0 p-[3px]">
      <Badge n={11} className="-top-[8px] -left-[61px]" />
      <div className="h-[30px] bg-[#f0f0f0] pt-[4px] pl-[3px]">
        <div className="flex border-t border-[#c0c0c0] pt-px text-[10px] leading-[18px]">
          <span className={clsx(cell, 'w-[92px] pl-1')}>Default</span>
          <span className={clsx(cell, 'w-[86px]')} />
          {[0, 1, 2].map(i => <span key={i} className={clsx(cell, 'w-[77px]')} />)}
          <span className={clsx(cell, 'w-[76px]')} />
          <span className={clsx(cell, 'w-[84px]')} />
          <span className={clsx(cell, 'flex flex-1 items-center gap-[5px] pl-1')}>
            <svg viewBox="0 0 12 10" className="h-[10px] w-3" stroke="#1fb030" strokeWidth="1.5">
              <path d="M1 10V7M3.5 10V5.5M6 10V4M8.5 10V2M11 10V0" />
            </svg>
            245.32 ms
          </span>
        </div>
      </div>
    </Callout>
  );
}

const arrow = 'fill-[#00337f] stroke-white [paint-order:stroke] [stroke-linejoin:round]';

export default function App() {
  return (
    <div className="min-h-screen bg-white pt-[3px] font-['Open_Sans','Noto_Sans_CJK_JP',sans-serif] [font-feature-settings:'palt']">
      {/* Enlarged menu and toolbar */}
      <Callout className="relative mr-[19px] ml-[43px] p-[3px]">
        <Badge n={1} className="-top-[7px] -left-[39px]" />
        <Badge n={2} className="top-[63px] -left-[39px]" />
        <header className="overflow-hidden bg-[#f0f0f0]">
          <MenuBar big />
          <div className="h-[3px] border-t-2 border-[#a0a0a0] bg-white" />
          <Toolbars big />
        </header>
      </Callout>

      <div className="relative mt-[41px]">
        <div className="overflow-hidden rounded-[20px] border-2 border-[#00337f] bg-[#f0f0f0]">
          <MenuBar />
          <div className="border-t border-[#b0b0b0]">
            <Toolbars><Account /></Toolbars>
          </div>

          <main className="flex">
            {/* Market watch + navigator */}
            <aside className="relative z-10 -mt-1 w-[270px] shrink-0 text-[10px]">
              <div className="flex">
                <Callout className="relative w-[259px] p-[3px]">
                  <Badge n={6} className="top-[3px] left-[2px]" />
                  <MarketWatch />
                </Callout>
                <div className="mt-[5px] ml-[3px] h-[15px] w-1 bg-[#bbccdb]" />
              </div>
              <div className="mt-[3px] flex h-[10px] items-end overflow-hidden pl-[2px] leading-[16px] text-[#888]">
                <button className="w-10 border border-[#555] bg-white text-black">銘柄</button>
                <button className="w-[39px]">詳細</button>
                <button className="w-[72px] border-l border-[#888]">プライスボード</button>
                <button className="w-[50px] border-l border-[#888]">ティック</button>
              </div>
              <div className="mt-[3px] flex">
                <Callout className="relative w-[259px] p-[3px]">
                  <Badge n={7} className="top-[3px] left-[2px]" />
                  <Navigator />
                </Callout>
                <div className="mt-1 ml-[3px] h-4 w-1 bg-[#bbccdb]" />
              </div>
              <div className="mt-[3px] flex h-[18px] w-[260px] border-t border-[#777] pl-[2px] leading-[14px] text-[#888]">
                <button className="w-10 border border-t-0 border-[#555] bg-white text-black">一般</button>
                <button className="w-[64px]">お気に入り</button>
              </div>
            </aside>

            {/* Chart windows */}
            <section className="grid flex-1 grid-cols-2 items-start self-start border-t-2 border-[#989898]">
              <div className="border-b-2 border-l border-[#808080] pb-[3px]">
                <WindowTitle name="EURAUDs,H1" />
                <div className="mx-1">
                  <Chart
                    id="euraud"
                    box={[277, 304, 622, 315]}
                    origin={280}
                    bottom={601}
                    title="EURAUDs, H1:  Euro vs Australian Dollar"
                    candles={euraud}
                    scale={[[98, '1.76880'], [184, '1.76740'], [271, '1.76600'], [356, '1.76460'], [444, '1.76320'], [529, '1.76180'], [615, '1.76040'], [703, '1.75900'], [789, '1.75760'], [877, '1.75620']]}
                    price={[775, '1.75783']}
                    showDates
                    overlay={(x, y) => sar.map((v, i) => v > 0 && <circle key={i} cx={x(i)} cy={y(v)} r="3.5" fill="#00ffff" />)}
                  />
                </div>
              </div>
              <div className="border-l-2 border-[#808080]">
                <WindowTitle name="GBPUSDs,H1" />
                <div className="mr-1 ml-[3px]">
                  <Chart
                    id="gbpusd"
                    box={[908, 304, 622, 315]}
                    origin={195}
                    bottom={601}
                    title="GBPUSDs, H1:  Great Britain Pound vs US Dollar"
                    candles={gbpusd}
                    scale={[[340, '1.35370'], [428, '1.35275'], [516, '1.35180'], [603, '1.35085'], [691, '1.34990'], [779, '1.34895'], [867, '1.34800'], [953, '1.34705'], [1040, '1.34610'], [1129, '1.34515']]}
                    price={[458, '1.35244']}
                    showDates
                    overlay={(x, y) => <polyline points={points(average, x, y)} fill="none" stroke="#ff4500" strokeWidth="1.8" />}
                  />
                </div>
              </div>
              <div>
                <div className="border-l border-[#808080]">
                  <WindowTitle name="EURJPYs,H1" />
                  <div className="mx-1 pt-px">
                    <Chart
                      id="eurjpy"
                      box={[277, 650, 622, 266]}
                      origin={620}
                      bottom={819}
                      title="EURJPYs, H1:  Euro vs Japanese Yen"
                      candles={eurjpy}
                      scale={[[169, '184.680'], [254, '184.465'], [340, '184.250'], [425, '184.035'], [512, '183.820']]}
                      price={[548, '183.731']}
                      pane={{ caption: 'MACD(12,26,9) -0.1082 -0.0900', labels: [[612, '0.2999'], [766, '0.0000'], [877, '-0.2215']], lines: [766] }}
                      overlay={(x, y) => (
                        <>
                          {macdBars.map((v, i) => (
                            <rect key={i} x={x(i) - 2.5} y={y(Math.min(v, 766))} width="5" height={Math.abs(v - 766) / 3} fill="#c0c0c0" />
                          ))}
                          <polyline points={points(macdLine, x, y)} fill="none" stroke="#66e0b8" strokeWidth="1.8" />
                        </>
                      )}
                    />
                  </div>
                </div>
                <Callout className="relative z-10 -mt-[11px] -ml-[7px] w-[338px] p-[3px]">
                  <Badge n={9} className="-top-[60px] -left-[3px]" />
                  <div className="flex h-7 items-start border-t border-black bg-[#f0f0f0] text-[10px] leading-[17px] whitespace-nowrap text-[#888]">
                    <button className="w-[83px]">EURAUDs,H1</button>
                    <button className="w-[76px] border-l border-[#888]">EURJPYs,H1</button>
                    <button className="w-[80px] border-l border-[#888]">GBPUSDs,H1</button>
                    <button className="w-[75px] border border-t-0 border-[#444] bg-white text-black">USDJPYs,H1</button>
                  </div>
                </Callout>
              </div>
              <Callout className="relative z-10 -mt-[9px] -ml-[6px] p-[5px]">
                <Badge n={8} className="top-[5px] left-[5px]" />
                <WindowTitle name="Ys,H1" active />
                <Chart
                  id="usdjpy"
                  box={[908, 650, 615, 266]}
                  origin={440}
                  bottom={818}
                  title="Ys, H1:  US Dollar vs Japanese Yen"
                  titleInset={53}
                  candles={usdjpy}
                  scale={[[714, '156.910'], [797, '156.675'], [881, '156.440'], [967, '156.205'], [1052, '155.970']]}
                  price={[1122, '155.780']}
                  pane={{ caption: 'RSI(14) 38.88', labels: [[1153, '100.00'], [1226, '70.00'], [1344, '30.00'], [1416, '0.00']], lines: [1226, 1344] }}
                  overlay={(x, y) => <polyline points={points(rsi, x, y)} fill="none" stroke="#1e90ff" strokeWidth="1.8" />}
                />
              </Callout>
            </section>
          </main>

          {/* Toolbox */}
          <Callout className="relative z-10 mt-[3px] p-[3px]">
            <Badge n={10} className="top-[3px] left-[2px]" />
            <Toolbox />
          </Callout>
          <div className="mt-[3px] flex h-5 text-[10px] leading-[15px] whitespace-nowrap text-[#888]">
            <div className="mr-[7px] h-[18px] w-[11px] bg-[#bbccdb]" />
            <button className="h-[17px] w-10 border border-t-0 border-[#444] bg-white leading-[13px] text-black">取引</button>
            {toolboxTabs.map(([label, width], i) => (
              <button key={label} className={clsx('h-[15px]', width, i > 0 && 'border-l border-[#888]')}>{label}</button>
            ))}
          </div>
          <footer className="flex h-[41px] justify-between border-t border-[#c0c0c0] text-[10px]">
            <span className="pt-[2px]">F1を押してヘルプを開く</span>
            <StatusCallout />
          </footer>
        </div>

        {/* Enlarged account block */}
        <Callout className="absolute top-[154px] right-[157px] z-20 h-[55px] w-[249px] p-[3px]">
          <div className="h-full bg-[#f0f0f0]"><Account big /></div>
          <Badge n={3} className="top-[40px] left-[3px]" />
          <Badge n={4} className="top-[40px] left-[62px]" />
          <Badge n={5} className="top-[40px] left-[158px]" />
        </Callout>
        <svg viewBox="630 170 170 110" className="absolute -top-8 left-[630px] z-20 w-[170px] overflow-visible">
          <path strokeWidth="6" className={arrow} d="M641 265C700 263 744 240 762 208L750 201L789 177L794 221L778 216C752 256 700 273 641 265Z" />
        </svg>
        <svg viewBox="1236 232 170 120" className="absolute top-[30px] right-[130px] z-20 w-[170px] overflow-visible">
          <path strokeWidth="6" className={arrow} d="M1396 242C1330 238 1280 258 1266 300L1247 294L1253 341L1293 312L1279 306C1295 270 1335 245 1396 242Z" />
        </svg>
      </div>
    </div>
  );
}
